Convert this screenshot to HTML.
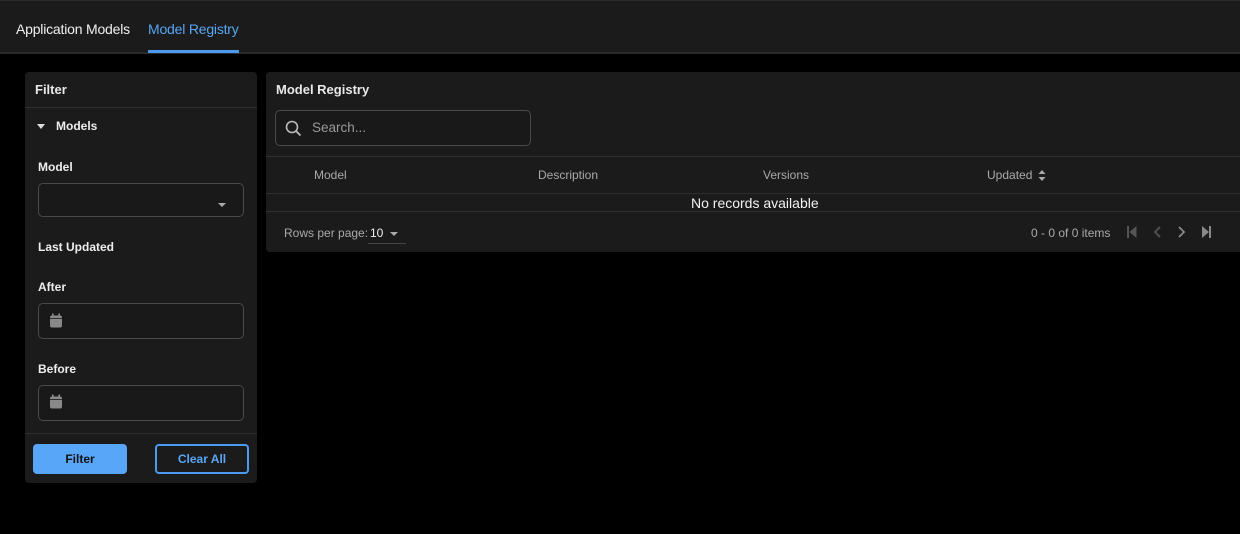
<!DOCTYPE html>
<html><head><style>
*{box-sizing:border-box;margin:0;padding:0}
body{width:1240px;height:534px;background:#000;font-family:"Liberation Sans",sans-serif;color:#e8e8e8;position:relative;overflow:hidden}
.abs{position:absolute}
.hdr{left:0;top:0;width:1240px;height:54px;background:#1b1b1b;border-bottom:2px solid #2b2b2b;border-top:1px solid #2a2a2a}
.tab{font-size:14px;top:21px}
.panel{background:#1b1b1b;border-radius:4px}
.lbl{font-size:12px;font-weight:bold;color:#eee}
.inp{border:1px solid #4a4a4a;border-radius:5px;background:#191919}
.th{font-size:12px;color:#aaa;top:168px}
</style></head><body>
<div class="abs hdr"></div>
<div class="abs tab" style="left:16px;color:#f0f0f0;letter-spacing:-0.2px">Application Models</div>
<div class="abs tab" style="left:148px;color:#58a6f5;letter-spacing:-0.2px">Model Registry</div>
<div class="abs" style="left:148px;top:50px;width:91px;height:3px;background:#4a9af0"></div>

<div class="abs panel" style="left:25px;top:72px;width:232px;height:411px"></div>
<div class="abs" style="left:35px;top:82px;font-size:13px;font-weight:bold">Filter</div>
<div class="abs" style="left:25px;top:107px;width:232px;height:1px;background:#2e2e2e"></div>
<div class="abs" style="left:37px;top:124px;width:0;height:0;border-left:4px solid transparent;border-right:4px solid transparent;border-top:5px solid #ddd"></div>
<div class="abs lbl" style="left:56px;top:119px">Models</div>
<div class="abs lbl" style="left:38px;top:160px">Model</div>
<div class="abs inp" style="left:38px;top:183px;width:206px;height:34px"></div>
<div class="abs" style="left:218px;top:203px;border-left:4px solid transparent;border-right:4px solid transparent;border-top:4px solid #aaa"></div>
<div class="abs lbl" style="left:38px;top:240px">Last Updated</div>
<div class="abs lbl" style="left:38px;top:280px">After</div>
<div class="abs inp" style="left:38px;top:303px;width:206px;height:36px"></div>
<svg class="abs" style="left:49px;top:313px" width="14" height="15" viewBox="0 0 14 15"><rect x="1" y="2.5" width="12" height="12" rx="2" fill="#8a8a8a"/><rect x="3" y="0.5" width="1.6" height="4" fill="#8a8a8a"/><rect x="9.4" y="0.5" width="1.6" height="4" fill="#8a8a8a"/><rect x="1" y="5" width="12" height="0.8" fill="#191919"/></svg>
<div class="abs lbl" style="left:38px;top:362px">Before</div>
<div class="abs inp" style="left:38px;top:385px;width:206px;height:36px"></div>
<svg class="abs" style="left:49px;top:394px" width="14" height="15" viewBox="0 0 14 15"><rect x="1" y="2.5" width="12" height="12" rx="2" fill="#8a8a8a"/><rect x="3" y="0.5" width="1.6" height="4" fill="#8a8a8a"/><rect x="9.4" y="0.5" width="1.6" height="4" fill="#8a8a8a"/><rect x="1" y="5" width="12" height="0.8" fill="#191919"/></svg>
<div class="abs" style="left:25px;top:433px;width:232px;height:1px;background:#2e2e2e"></div>
<div class="abs" style="left:33px;top:444px;width:94px;height:30px;background:#58a6f8;border-radius:4px;color:#111;font-size:12px;font-weight:bold;text-align:center;line-height:30px">Filter</div>
<div class="abs" style="left:155px;top:444px;width:94px;height:30px;border:2px solid #4a9af0;border-radius:4px;color:#58a6f5;font-size:12px;font-weight:bold;text-align:center;line-height:26px">Clear All</div>

<div class="abs panel" style="left:266px;top:72px;width:980px;height:180px"></div>
<div class="abs" style="left:276px;top:82px;font-size:13px;font-weight:bold">Model Registry</div>
<div class="abs inp" style="left:275px;top:110px;width:256px;height:36px"></div>
<svg class="abs" style="left:285px;top:120px" width="17" height="17" viewBox="0 0 17 17"><circle cx="7" cy="7" r="5.5" stroke="#bbb" stroke-width="1.6" fill="none"/><line x1="11" y1="11" x2="15.5" y2="15.5" stroke="#bbb" stroke-width="1.8"/></svg>
<div class="abs" style="left:312px;top:120px;font-size:13.5px;color:#999">Search...</div>
<div class="abs" style="left:266px;top:156px;width:974px;height:1px;background:#2e2e2e"></div>
<div class="abs th" style="left:314px">Model</div>
<div class="abs th" style="left:538px">Description</div>
<div class="abs th" style="left:763px">Versions</div>
<div class="abs th" style="left:987px">Updated</div>
<svg class="abs" style="left:1038px;top:170px" width="8" height="11" viewBox="0 0 8 11"><path d="M4 0L7.5 4H0.5Z M4 11L7.5 7H0.5Z" fill="#aaa"/></svg>
<div class="abs" style="left:266px;top:193px;width:974px;height:1px;background:#2e2e2e"></div>
<div class="abs" style="left:691px;top:195px;font-size:14px;color:#f2f2f2">No records available</div>
<div class="abs" style="left:266px;top:211px;width:974px;height:1px;background:#2e2e2e"></div>
<div class="abs" style="left:284px;top:226px;font-size:12px;color:#aaa">Rows per page:</div>
<div class="abs" style="left:370px;top:226px;font-size:12px;color:#eee">10</div>
<div class="abs" style="left:390px;top:232px;border-left:4px solid transparent;border-right:4px solid transparent;border-top:4px solid #aaa"></div>
<div class="abs" style="left:368px;top:243px;width:38px;height:1px;background:#444"></div>
<div class="abs" style="left:1031px;top:226px;font-size:12px;color:#aaa">0 - 0 of 0 items</div>
<svg class="abs" style="left:1120px;top:224px" width="100" height="16" viewBox="0 0 100 16">
<g fill="#555"><rect x="7" y="2" width="2" height="12"/><path d="M16.5 2L9.5 8L16.5 14Z"/></g>
<path d="M40 3L35 8L40 13" stroke="#555" stroke-width="1.8" fill="none"/>
<path d="M59 3L64 8L59 13" stroke="#888" stroke-width="1.8" fill="none"/>
<g fill="#888"><path d="M82 2L89 8L82 14Z"/><rect x="89" y="2" width="2" height="12"/></g>
</svg>
</body></html>
